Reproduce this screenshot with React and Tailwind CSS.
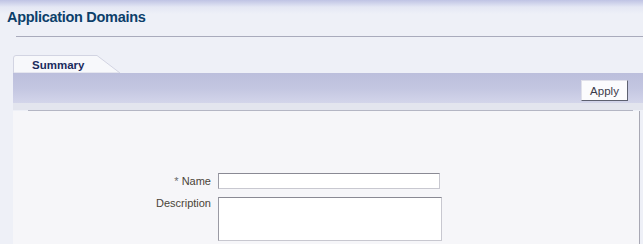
export default function App() {
  return (
    <div className="w-[643px] h-[244px] overflow-hidden bg-[#eef0f7] font-['Liberation_Sans',Arial,sans-serif] relative">
      {/* header */}
      <div className="bg-gradient-to-b from-[#bfc3e4] via-[#e4e7f4] to-transparent h-[14px]" />
      <div className="-mt-[6px] pl-[7px] h-[18px] leading-[18px] text-[14.5px] font-bold text-[#0c3f6a] tracking-[-0.3px]">
        Application Domains
      </div>
      <div className="mt-[10px] ml-[16px] border-t border-[#a9abbc]" />
      {/* tab */}
      <div className="mt-[18px] ml-[13px] relative h-[18px] w-[108px]">
        <svg className="absolute inset-0" width="108" height="18" viewBox="0 0 108 18">
          <path d="M0.5 18 L0.5 3 Q0.5 0.5 3 0.5 L84 0.5 L107 18 Z" fill="#f7f8fb" stroke="#d2d4e2" strokeWidth="1" />
        </svg>
        <div className="relative pl-[19px] leading-[18px] text-[11.5px] font-bold text-[#1b2c5e] pt-[1px]">Summary</div>
      </div>
      {/* band */}
      <div className="ml-[13px] h-[30px] bg-gradient-to-b from-[#bcbfdc] via-[#c3c6e1] to-[#d3d5ea] flex items-start justify-end pr-[15px] pt-[7px]">
        <button className="w-[47px] h-[21px] bg-[#fbfbfd] border border-t-[#e0e0ea] border-l-[#e0e0ea] border-r-[#5d6070] border-b-[#5d6070] text-[11.5px] text-[#3a3a4a] leading-[18px]">
          Apply
        </button>
      </div>
      <div className="ml-[13px] h-[7px] bg-[#e3e5ee]" />
      <div className="ml-[28px] mr-[10px] border-t border-[#b4b6c4]" />
      {/* content */}
      <div className="ml-[13px] mr-[3px] border-r border-[#a8a8b4] bg-[#f6f6f9] h-[140px] pt-[62px]">
        <div className="grid grid-cols-[198px_224px] gap-x-[7px] gap-y-[8px] text-[11px] text-[#4a4438]">
          <div className="text-right leading-[16px]">
            <span className="text-[#6a6a6a]">*</span> Name
          </div>
          <div className="h-[16px] bg-white border border-[#c8c8d0] border-t-[#8a8a94] border-l-[#9a9aa4] w-[222px]" />
          <div className="text-right leading-[16px] -mt-[2px]">Description</div>
          <div className="h-[44px] bg-white border border-[#c8c8d0] border-t-[#8a8a94] border-l-[#9a9aa4] w-[224px]" />
        </div>
      </div>
    </div>
  );
}
